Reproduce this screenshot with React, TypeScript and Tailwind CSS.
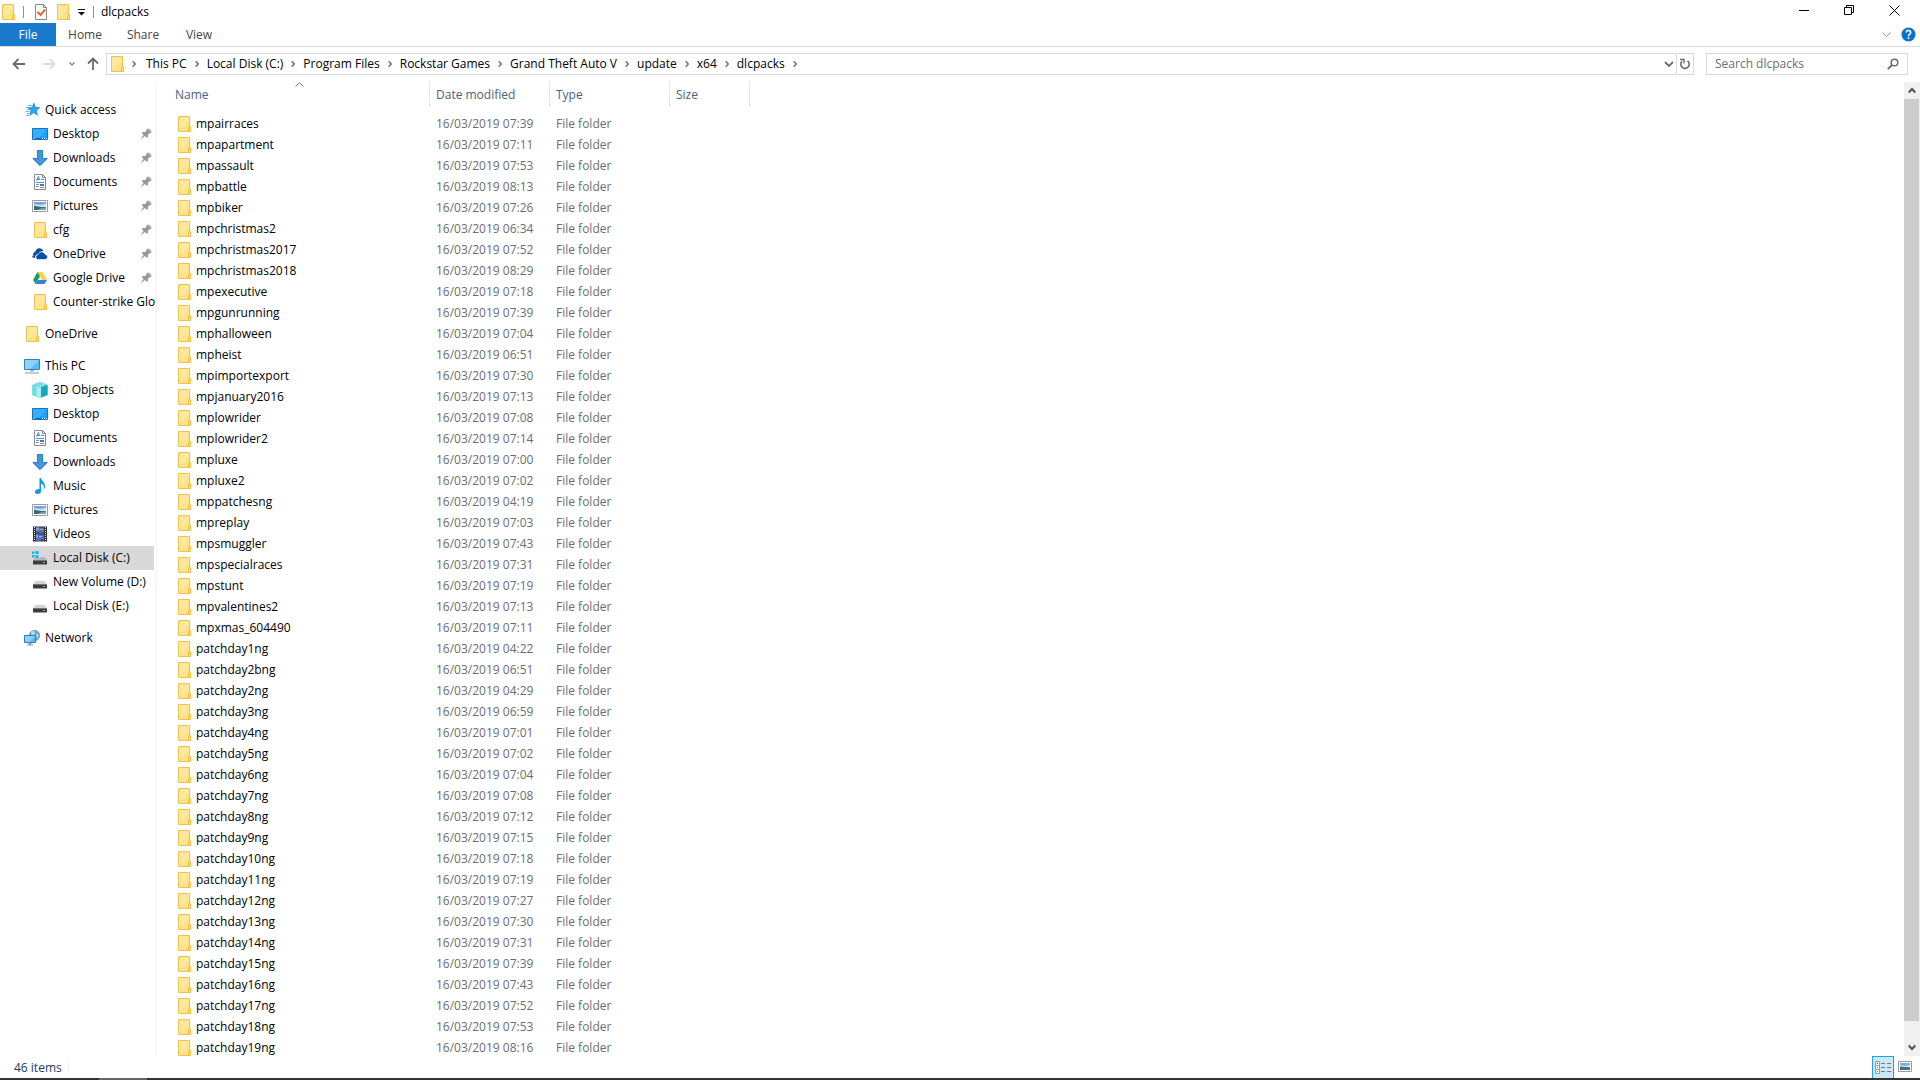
import type { ReactNode } from "react";

const folders = [
  ["mpairraces", "07:39"],
  ["mpapartment", "07:11"],
  ["mpassault", "07:53"],
  ["mpbattle", "08:13"],
  ["mpbiker", "07:26"],
  ["mpchristmas2", "06:34"],
  ["mpchristmas2017", "07:52"],
  ["mpchristmas2018", "08:29"],
  ["mpexecutive", "07:18"],
  ["mpgunrunning", "07:39"],
  ["mphalloween", "07:04"],
  ["mpheist", "06:51"],
  ["mpimportexport", "07:30"],
  ["mpjanuary2016", "07:13"],
  ["mplowrider", "07:08"],
  ["mplowrider2", "07:14"],
  ["mpluxe", "07:00"],
  ["mpluxe2", "07:02"],
  ["mppatchesng", "04:19"],
  ["mpreplay", "07:03"],
  ["mpsmuggler", "07:43"],
  ["mpspecialraces", "07:31"],
  ["mpstunt", "07:19"],
  ["mpvalentines2", "07:13"],
  ["mpxmas_604490", "07:11"],
  ["patchday1ng", "04:22"],
  ["patchday2bng", "06:51"],
  ["patchday2ng", "04:29"],
  ["patchday3ng", "06:59"],
  ["patchday4ng", "07:01"],
  ["patchday5ng", "07:02"],
  ["patchday6ng", "07:04"],
  ["patchday7ng", "07:08"],
  ["patchday8ng", "07:12"],
  ["patchday9ng", "07:15"],
  ["patchday10ng", "07:18"],
  ["patchday11ng", "07:19"],
  ["patchday12ng", "07:27"],
  ["patchday13ng", "07:30"],
  ["patchday14ng", "07:31"],
  ["patchday15ng", "07:39"],
  ["patchday16ng", "07:43"],
  ["patchday17ng", "07:52"],
  ["patchday18ng", "07:53"],
  ["patchday19ng", "08:16"],
];

const crumbs = ["This PC", "Local Disk (C:)", "Program Files", "Rockstar Games", "Grand Theft Auto V", "update", "x64", "dlcpacks"];

const Svg = ({ children }: { children: ReactNode }) => (
  <svg className="h-4 w-4 shrink-0" viewBox="0 0 16 16" fill="none" aria-hidden="true">{children}</svg>
);

const FolderIcon = () => (
  <Svg>
    <path d="M2.5 .5h11v15h-11z" fill="#ffe28a" stroke="#edc54b" />
    <path d="M3 1h10v5L3 13z" fill="#ffe89c" />
    <path d="M12.5 15.5v-4l1-1h1v5z" fill="#ffe28a" stroke="#e9bf42" />
  </Svg>
);

const StarIcon = () => (
  <Svg>
    <path d="M9.8 1.200l1.500 4.300 4.400.1-3.500 2.800 1.200 4.700-3.800-2.500-3.800 2.600 1.300-4.600L4 5.700l4.300-.1z" fill="#2aa4f4" stroke="#1a86d8" strokeWidth=".8" />
    <path d="M4 3.500h4M2 5.500h3M3 7.500h3M1.500 9.500h4M3 11.500h2M2 13.500h3" stroke="#62bdf5" />
  </Svg>
);

const DesktopIcon = () => (
  <Svg>
    <path d="M.5 2.500h15v11H.5z" fill="#1aa1fb" stroke="#0d74c4" />
    <path d="M1 3h14L7 12H1z" fill="#36aefc" />
    <path d="M1 12.500h14" stroke="#0b6db8" />
    <path d="M1.500 12.500h1M10 12.500h1M12 12.500h1M14 12.500h1" stroke="#fff" />
  </Svg>
);

const DownloadIcon = () => (
  <Svg><path d="M5.500 .5h5v8h4.700L8 15.700.8 8.500h4.700z" fill="#3f96e3" stroke="#2b7dcc" /></Svg>
);

const DocumentIcon = () => (
  <Svg>
    <path d="M2.500 .5h8l3 3v12h-11z" fill="#fff" stroke="#8b8b8b" />
    <path d="M10.500 .5v3h3" stroke="#8b8b8b" />
    <path d="M4.500 6.500L6.500 2.500 7.500 6M5 5.500h2" stroke="#2389d4" />
    <path d="M9 5.500h3M4 8.500h8" stroke="#4d93c8" />
    <path d="M4 10.500h3M4 12.500h3M8 13.500h4" stroke="#8b8b8b" />
    <path d="M8 10h4v2H8z" fill="#3c7ea8" />
  </Svg>
);

const PictureIcon = () => (
  <Svg>
    <path d="M.5 2.500h15v11H.5z" fill="#fff" stroke="#9a9a9a" />
    <path d="M2 4h12v8H2z" fill="#6da7ee" />
    <path d="M2 6l6 1 6-1v3H2z" fill="#cfe4f8" />
    <path d="M2 7.500l4 1 8 1V12H2z" fill="#3d6b6d" />
    <path d="M5 12l5-2h4v2z" fill="#7a9dbc" />
  </Svg>
);

const OneDriveIcon = () => (
  <Svg>
    <path d="M2 10.500A3 3 0 0 1 3.500 5.500 4.200 4.200 0 0 1 11.500 5Q8 5 7 8q-4 0-4 4Q0 12 0 9.500" fill="#0a4bac" />
    <path d="M5.500 13.500a2.600 2.600 0 0 1 .5-5 3.700 3.700 0 0 1 7-.3 2.700 2.700 0 0 1 .5 5.300z" fill="#0a4bac" stroke="#fff" strokeWidth=".7" />
  </Svg>
);

const GoogleDriveIcon = () => (
  <Svg>
    <path d="M5.500 2h5l4.500 8h-5z" fill="#ffcf48" />
    <path d="M5.500 2L8 6.300 3.600 14 1 10z" fill="#11a15f" />
    <path d="M6 10h9l-2.500 4h-9z" fill="#3a79e8" />
  </Svg>
);

const ThisPcIcon = () => (
  <Svg>
    <path d="M.5 1.500h15v10H.5z" fill="#5cbcf8" stroke="#3582b8" />
    <path d="M1 2h14L6 11H1z" fill="#8ad3fc" />
    <path d="M6 12h4v1.500H6z" fill="#9db3c2" />
    <path d="M1 15h14" stroke="#8a9baa" />
  </Svg>
);

const CubeIcon = () => (
  <Svg>
    <path d="M8 0l7.500 3v10L8 16 .5 13V3z" fill="#2cbccd" />
    <path d="M8 0l7.500 3L8 5.500.5 3z" fill="#7adfe8" />
    <path d="M.5 3L8 5.500V16L.5 13z" fill="#6fdde6" />
    <path d="M4.500 4.300L8 5.500l2-.7v10.400L8 16l-3.500-1.400z" fill="#a9eef2" />
    <path d="M9 5.200L15.500 3v10L9 15.600z" fill="#1ba6ba" />
  </Svg>
);

const MusicIcon = () => (
  <Svg>
    <path d="M7.500 0h1.500c0 3 4.500 4 4 9-.1 1-.8 2-1.500 2.500C12.500 8 11.500 6.500 9 5.500V13c0 2-1.500 3-3.500 3S3 14.800 3 13.500 4.500 11 7.500 11z" fill="#1295ee" />
  </Svg>
);

const VideoIcon = () => (
  <Svg>
    <path d="M1 .5h14v15H1z" fill="#333" />
    <path d="M2.500 1v14M13.500 1v14" stroke="#d8d8d8" strokeDasharray="1 1" />
    <path d="M4 1.500h8v6H4zM4 8.500h8v6.500H4z" fill="#4a72cc" />
    <path d="M4 1.500h3v3H4zM4 8.500h2v3H4z" fill="#7ea2e6" />
    <path d="M8 3h3v1H8zM7 10h3v1H7z" fill="#e3b31e" />
    <path d="M5 6h2v1.500H5zM9 13h2v2H9z" fill="#4f4436" />
    <path d="M9 5.500h2v1H9z" fill="#c43e32" />
  </Svg>
);

const DiskIcon = ({ system = false }) => (
  <Svg>
    <path d="M3 7h10l2 3.500H1z" fill={system ? "#b5b8bb" : "#d2d3d5"} />
    <path d="M1 10h14v4.500H1z" fill="#3a3d40" />
    <path d="M1 10.500h14" stroke="#74787b" />
    <path d="M11 12.500h2" stroke="#47d84c" />
    {system && <path d="M0 1h8v7H0z" fill="#d9d9d9" />}
    {system && <path d="M0 1.500h2.500v2.500H0zM3.500 1h3v3h-3zM0 5h2.500v2.500H0zM3.500 5h3v3h-3z" fill="#10b5ee" />}
  </Svg>
);

const NetworkIcon = () => (
  <Svg>
    <circle cx="10.500" cy="5.500" r="5.200" fill="#6aa9c8" stroke="#4a86aa" strokeWidth=".6" />
    <path d="M7 2l3-1.500 1 3-3 3zM12 4l3 1-2 4z" fill="#b7dcea" />
    <path d="M.5 5.500h11v7H.5z" fill="#5cbcf8" stroke="#2d7cb5" />
    <path d="M1 6h10l-6 6H1z" fill="#88d2fc" />
    <path d="M5 13h2v1.500H5zM3 15h6" fill="#9db3c2" stroke="#8a9baa" />
  </Svg>
);

const PinIcon = () => (
  <svg className="h-3 w-3 shrink-0" viewBox="0 0 12 12" aria-hidden="true">
    <path d="M7 1l4 4-1 .5-.5-.2L7.800 7l.2 2-1 1-2-2-4 3-.3-.3L3.500 7 1.800 5l1-1 2 .2 1.800-1.700L6.300 2z" fill="#8d99a3" />
    <path d="M7.500 .5h1l3 3v1h-1l-3-3z" fill="#8d99a3" />
  </svg>
);

const CheckDocIcon = () => (
  <Svg>
    <path d="M2.500 .5h8l3 3v12h-11z" fill="#f6f7f9" stroke="#8a8a8a" />
    <path d="M10.500 .5v3h3" stroke="#8a8a8a" />
    <path d="M4.500 8l3 3 4.500-5.500" stroke="#e8551c" strokeWidth="1.800" />
  </Svg>
);

const Chevron = () => (
  <svg className="h-2 w-1 shrink-0" viewBox="0 0 4 8" fill="none" aria-hidden="true">
    <path d="M.7 1.200L3.300 4 .7 6.800" stroke="#6d6d6d" strokeWidth="1.400" />
  </svg>
);

type Place = { label: string; icon: ReactNode; pinned?: boolean; top?: boolean; gap?: boolean; active?: boolean };

const places: Place[] = [
  { label: "Quick access", icon: <StarIcon />, top: true },
  { label: "Desktop", icon: <DesktopIcon />, pinned: true },
  { label: "Downloads", icon: <DownloadIcon />, pinned: true },
  { label: "Documents", icon: <DocumentIcon />, pinned: true },
  { label: "Pictures", icon: <PictureIcon />, pinned: true },
  { label: "cfg", icon: <FolderIcon />, pinned: true },
  { label: "OneDrive", icon: <OneDriveIcon />, pinned: true },
  { label: "Google Drive", icon: <GoogleDriveIcon />, pinned: true },
  { label: "Counter-strike Glo", icon: <FolderIcon /> },
  { label: "OneDrive", icon: <FolderIcon />, top: true, gap: true },
  { label: "This PC", icon: <ThisPcIcon />, top: true, gap: true },
  { label: "3D Objects", icon: <CubeIcon /> },
  { label: "Desktop", icon: <DesktopIcon /> },
  { label: "Documents", icon: <DocumentIcon /> },
  { label: "Downloads", icon: <DownloadIcon /> },
  { label: "Music", icon: <MusicIcon /> },
  { label: "Pictures", icon: <PictureIcon /> },
  { label: "Videos", icon: <VideoIcon /> },
  { label: "Local Disk (C:)", icon: <DiskIcon system />, active: true },
  { label: "New Volume (D:)", icon: <DiskIcon /> },
  { label: "Local Disk (E:)", icon: <DiskIcon /> },
  { label: "Network", icon: <NetworkIcon />, top: true, gap: true },
];

const TitleBar = () => (
  <header className="flex h-[23px] shrink-0 items-center">
    <FolderIcon />
    <span className="ml-[7px] h-3 w-px bg-[#8f8f8f]" />
    <button type="button" aria-label="Properties" className="ml-[9px]"><CheckDocIcon /></button>
    <button type="button" aria-label="New folder" className="ml-[6px]"><FolderIcon /></button>
    <button type="button" aria-label="Customize toolbar" className="ml-[7px]">
      <svg className="h-2 w-2" viewBox="0 0 8 8" aria-hidden="true">
        <path d="M0 1h7v1H0zM0 4h7L3.500 7.500z" fill="#111" />
      </svg>
    </button>
    <span className="ml-[7px] h-3 w-px bg-[#8f8f8f]" />
    <h1 className="ml-[7px]">dlcpacks</h1>
    <div className="ml-auto flex h-full pr-[3px] pb-[2px]">
      <button type="button" aria-label="Minimize" className="flex w-[45px] items-center justify-center">
        <svg className="h-[11px] w-[11px]" viewBox="0 0 11 11"><path d="M0 5.500h10" stroke="#000" /></svg>
      </button>
      <button type="button" aria-label="Restore" className="flex w-[45px] items-center justify-center">
        <svg className="h-[11px] w-[11px]" viewBox="0 0 11 11" fill="none">
          <path d="M.5 2.500h7v7h-7zM2.500 2.500v-2h7v7h-2" stroke="#000" />
        </svg>
      </button>
      <button type="button" aria-label="Close" className="flex w-[45px] items-center justify-center">
        <svg className="h-[11px] w-[11px]" viewBox="0 0 11 11"><path d="M.5 .5l10 10M10.500 .5l-10 10" stroke="#000" /></svg>
      </button>
    </div>
  </header>
);

const Ribbon = () => (
  <nav className="flex h-6 shrink-0 items-stretch border-b border-[#dadbdc] text-[#444]">
    <button type="button" className="w-14 bg-[#1979ca] text-white">File</button>
    <button type="button" className="w-[58px]">Home</button>
    <button type="button" className="w-[58px]">Share</button>
    <button type="button" className="w-[54px]">View</button>
    <button type="button" aria-label="Expand ribbon" className="ml-auto">
      <svg className="h-[5px] w-[9px]" viewBox="0 0 9 5" fill="none"><path d="M.5 .5l4 4 4-4" stroke="#999" /></svg>
    </button>
    <button type="button" aria-label="Help" className="mr-1 ml-[10px]">
      <svg className="h-[15px] w-[15px]" viewBox="0 0 15 15" fill="none">
        <circle cx="7.500" cy="7.500" r="7" fill="#0b72d0" />
        <path d="M5.300 5.600c0-3 4.400-2.800 4.400 0 0 1.700-2.200 1.600-2.200 3.600M7.500 10.300v1.700" stroke="#fff" strokeWidth="1.600" />
      </svg>
    </button>
  </nav>
);

const AddressBar = () => (
  <div className="flex shrink-0 items-center pt-[6px] pr-3 pb-[7px] text-black">
    <button type="button" aria-label="Back" className="ml-3">
      <svg className="h-[14px] w-[14px]" viewBox="0 0 14 14" fill="none"><path d="M13 7H2M6.500 2L1.500 7l5 5" stroke="#6b6b6b" strokeWidth="1.800" /></svg>
    </button>
    <button type="button" aria-label="Forward" className="ml-4">
      <svg className="h-[14px] w-[14px]" viewBox="0 0 14 14" fill="none"><path d="M1 7h11M7.500 2l5 5-5 5" stroke="#dcdcdc" strokeWidth="1.800" /></svg>
    </button>
    <button type="button" aria-label="Recent locations" className="ml-3">
      <svg className="h-2 w-2" viewBox="0 0 8 8" fill="none"><path d="M1.500 2.500L4 5l2.500-2.500" stroke="#8a8a8a" strokeWidth="1.500" /></svg>
    </button>
    <button type="button" aria-label="Up" className="ml-[10px]">
      <svg className="h-[14px] w-[14px]" viewBox="0 0 14 14" fill="none"><path d="M7 13V2M2 6.500l5-5 5 5" stroke="#6b6b6b" strokeWidth="1.800" /></svg>
    </button>
    <div className="ml-[6px] flex h-[22px] flex-1 items-center border border-[#d9d9d9] pl-[2px]">
      <FolderIcon />
      <span className="mr-[2px] ml-[7px]"><Chevron /></span>
      {crumbs.map((crumb) => (
        <div key={crumb} className="flex items-center">
          <a href="#" className="px-2 whitespace-nowrap">{crumb}</a>
          <Chevron />
        </div>
      ))}
      <button type="button" aria-label="Previous locations" className="mr-[2px] ml-auto">
        <svg className="h-2 w-[10px]" viewBox="0 0 10 8" fill="none"><path d="M1 2l4 4 4-4" stroke="#6b6b6b" strokeWidth="1.800" /></svg>
      </button>
      <button type="button" aria-label="Refresh" className="flex h-full w-[17px] items-center justify-center border-l border-[#d9d9d9]">
        <svg className="h-3 w-3" viewBox="0 0 12 12" fill="none">
          <path d="M8.500 2.800A4.200 4.200 0 1 1 3 3.300" stroke="#6b6b6b" strokeWidth="1.600" />
          <path d="M1 1.500h4v4" stroke="#6b6b6b" strokeWidth="1.400" />
        </svg>
      </button>
    </div>
    <form role="search" className="ml-3 flex h-[22px] w-[202px] items-center border border-[#d9d9d9] px-2">
      <input type="text" aria-label="Search dlcpacks" placeholder="Search dlcpacks" className="w-full min-w-0 flex-1 bg-transparent outline-none placeholder:text-[#6d6d6d]" />
      <button type="button" aria-label="Search">
        <svg className="h-3 w-3" viewBox="0 0 12 12" fill="none">
          <circle cx="7.500" cy="4.500" r="3.300" stroke="#6b6b6b" strokeWidth="1.500" />
          <path d="M5 7L.8 11.200" stroke="#6b6b6b" strokeWidth="1.900" />
        </svg>
      </button>
    </form>
  </div>
);

const Sidebar = () => (
  <aside className="w-[157px] shrink-0 border-r border-[#f3f3f3] pt-4 pr-[2px] text-black">
    {places.map(({ label, icon, pinned, top, gap, active }, i) => (
      <a
        key={i}
        href="#"
        className={`flex h-6 items-center gap-[5px] ${top ? "pl-6" : "pl-8"} ${gap ? "mt-2" : ""} ${active ? "bg-[#d9d9d9]" : ""} ${pinned ? "pr-[2px]" : ""}`}
      >
        {icon}
        <span className="min-w-0 flex-1 whitespace-nowrap">{label}</span>
        {pinned && <PinIcon />}
      </a>
    ))}
  </aside>
);

const FileList = () => (
  <main className="min-w-0 flex-1 overflow-hidden">
    <table className="w-[593px] table-fixed border-separate border-spacing-0 text-left">
      <thead>
        <tr className="h-[25px] text-[#4c607a]">
          <th className="relative w-[273px] border-r border-[#e5e5e5] p-0 pl-[18px] font-normal">
            Name
            <svg className="absolute top-0 left-[138px] h-[5px] w-[9px]" viewBox="0 0 9 5" fill="none"><path d="M.5 4.500l4-4 4 4" stroke="#777" /></svg>
          </th>
          <th className="w-[120px] border-r border-[#e5e5e5] p-0 pl-[6px] font-normal">Date modified</th>
          <th className="w-[120px] border-r border-[#e5e5e5] p-0 pl-[6px] font-normal">Type</th>
          <th className="w-20 border-r border-[#e5e5e5] p-0 pl-[6px] font-normal">Size</th>
        </tr>
      </thead>
      <tbody className="text-[#6d6d6d] before:block before:h-[6px]">
        {folders.map(([name, time]) => (
          <tr key={name} className="h-[21px]">
            <td className="p-0 pl-[19px]">
              <div className="flex items-center gap-1 text-black"><FolderIcon />{name}</div>
            </td>
            <td className="p-0 pl-[6px]">16/03/2019 {time}</td>
            <td className="p-0 pl-[6px]">File folder</td>
            <td />
          </tr>
        ))}
      </tbody>
    </table>
  </main>
);

const Scrollbar = () => (
  <div className="flex w-4 shrink-0 flex-col bg-[#f0f0f0]">
    <button type="button" aria-label="Scroll up" className="flex h-[17px] items-center justify-center">
      <svg className="h-[7px] w-2" viewBox="0 0 8 7" fill="none"><path d="M.7 5.500L4 2l3.300 3.500" stroke="#505050" strokeWidth="2" /></svg>
    </button>
    <div className="mr-px grow-[922] bg-[#cdcdcd]" />
    <div className="grow-[18]" />
    <button type="button" aria-label="Scroll down" className="flex h-[17px] items-center justify-center">
      <svg className="h-[7px] w-2" viewBox="0 0 8 7" fill="none"><path d="M.7 1.500L4 5l3.300-3.500" stroke="#505050" strokeWidth="2" /></svg>
    </button>
  </div>
);

const StatusBar = () => (
  <footer className="flex h-[22px] shrink-0 items-center pl-[14px] text-[#1e395b]">
    <span className="w-[54px] pt-[2px]">46 items</span>
    <span className="h-[11px] w-px bg-[#eee]" />
    <button type="button" aria-label="Details view" className="ml-auto flex h-full w-[22px] items-center justify-center border border-b-0 border-[#26a0da] bg-[#cbe8f6]">
      <svg className="h-[13px] w-4" viewBox="0 0 16 13" fill="none">
        <path d="M.5 .5h4v4h-4zM.5 4.500h4v4h-4zM.5 8.500h4v4h-4z" fill="#fff" stroke="#999" />
        <path d="M2 2h1v1H2z" fill="#444" />
        <path d="M2 6h1v1H2z" fill="#3c7ad0" />
        <path d="M2 10h1v1H2z" fill="#c0392b" />
        <path d="M6 2.500h4M12 2.500h4M6 6.500h4M12 6.500h4M6 10.500h4M12 10.500h4" stroke="#777" />
      </svg>
    </button>
    <button type="button" aria-label="Large icons view" className="flex h-full w-[26px] items-center pb-px pl-1">
      <svg className="h-[11px] w-[14px]" viewBox="0 0 14 11" fill="none">
        <path d="M.5 .5h13v10H.5z" fill="#fff" stroke="#999" />
        <path d="M2 2h10v7H2z" fill="#78a9ea" />
        <path d="M2 4l5 1 5-1v2H2z" fill="#d5e7f7" />
        <path d="M2 5.500l10 1V9H2z" fill="#45706f" />
      </svg>
    </button>
  </footer>
);

export default function App() {
  return (
    <div className="flex h-screen flex-col overflow-hidden bg-white font-['Open_Sans','Noto_Sans',sans-serif] text-[12px] leading-4 text-black">
      <TitleBar />
      <Ribbon />
      <AddressBar />
      <div className="flex min-h-0 flex-1">
        <Sidebar />
        <FileList />
        <Scrollbar />
      </div>
      <StatusBar />
      {/* top edge of the taskbar */}
      <div className="flex h-[2px] shrink-0 bg-[#333] pl-[99px]">
        <div className="w-12 bg-[#666]" />
      </div>
    </div>
  );
}
